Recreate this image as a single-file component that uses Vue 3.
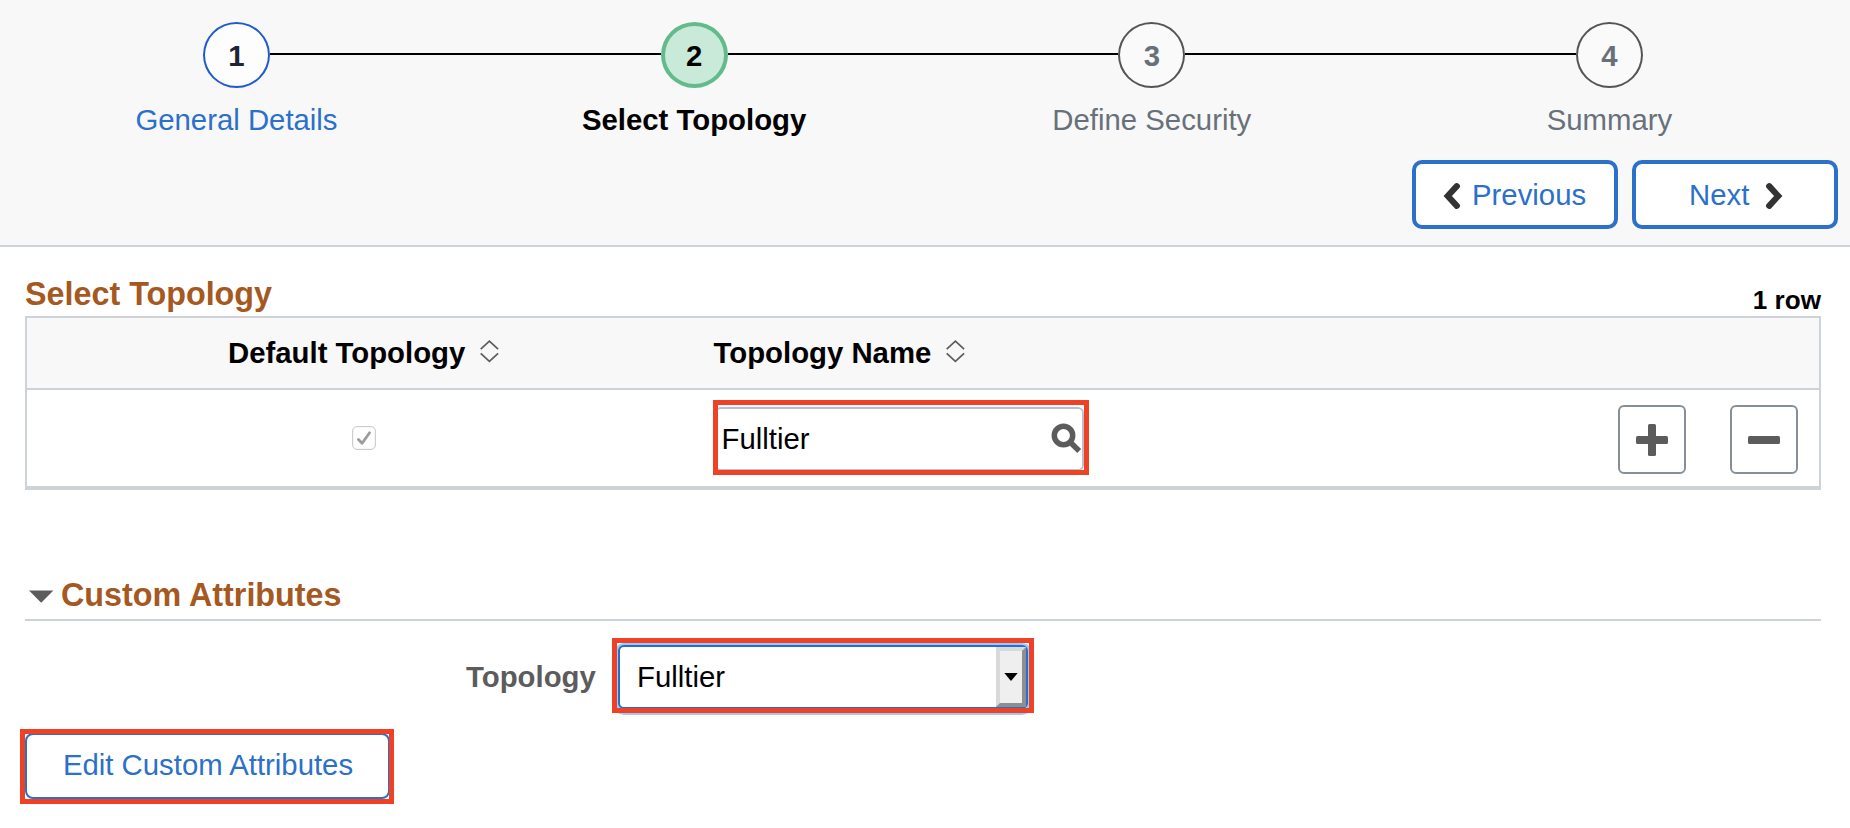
<script setup>
const steps = [
  { label: 'General Details', state: 'visited' },
  { label: 'Select Topology', state: 'current' },
  { label: 'Define Security', state: 'pending' },
  { label: 'Summary', state: 'pending' },
]
const columns = ['Default Topology', 'Topology Name']
const rows = [{ name: 'Fulltier' }]
</script>

<template>
  <div class="page">
    <header class="top">
      <ol class="steps">
        <li v-for="(step, i) in steps" :key="step.label" class="step" :class="step.state">
          <div class="track">
            <span class="line"></span>
            <span class="dot">{{ i + 1 }}</span>
            <span class="line"></span>
          </div>
          <span class="label">{{ step.label }}</span>
        </li>
      </ol>
      <nav class="nav">
        <button class="nav-btn prev">
          <svg class="chev" width="18" height="28" viewBox="0 0 18 28">
            <path d="M13.8 4.2 L4.8 14 L13.8 23.8" />
          </svg>
          <span>Previous</span>
        </button>
        <button class="nav-btn next">
          <span>Next</span>
          <svg class="chev" width="18" height="28" viewBox="0 0 18 28">
            <path d="M4.2 4.2 L13.2 14 L4.2 23.8" />
          </svg>
        </button>
      </nav>
    </header>

    <section class="grid-section">
      <div class="grid-title">
        <h2>Select Topology</h2>
        <span class="count">{{ rows.length }} row</span>
      </div>
      <div class="grid">
        <div class="cells head">
          <div v-for="(col, i) in columns" :key="col" class="th" :class="{ center: i === 0 }">
            <span>{{ col }}</span>
            <svg class="sort" width="19" height="23" viewBox="0 0 19 23">
              <path d="M0.7 9.2 L9.4 1.2 L18.1 9.2 M0.7 13.4 L9.4 21.4 L18.1 13.4" />
            </svg>
          </div>
        </div>
        <div v-for="row in rows" :key="row.name" class="cells body">
          <div class="check-cell">
            <span class="check">
              <svg width="22" height="22" viewBox="0 0 22 22">
                <path d="M5.4 12.4 L9.1 16.2 L16.6 5.8" />
              </svg>
            </span>
          </div>
          <div class="lookup marked">
            <div class="lookup-input">
              <span>{{ row.name }}</span>
              <svg class="search" width="31" height="31" viewBox="0 0 31 31">
                <circle cx="12.5" cy="12.5" r="9.2" />
                <path d="M18.5 18.5 L28.2 28" />
              </svg>
            </div>
          </div>
          <div class="actions">
            <button class="sq">
              <svg width="32" height="32" viewBox="0 0 32 32">
                <rect x="0" y="12" width="32" height="8" rx="1.5" />
                <rect x="12" y="0" width="8" height="32" rx="1.5" />
              </svg>
            </button>
            <button class="sq">
              <svg width="32" height="32" viewBox="0 0 32 32">
                <rect x="0" y="12" width="32" height="8" rx="1.5" />
              </svg>
            </button>
          </div>
        </div>
      </div>
    </section>

    <section class="attrs">
      <div class="attrs-title">
        <svg width="25" height="13" viewBox="0 0 25 13"><path d="M0 0.6 H24.4 L12.2 12.8 Z" /></svg>
        <h2>Custom Attributes</h2>
      </div>
      <div class="field">
        <label>Topology</label>
        <div class="select-wrap marked">
          <div class="select">
            <span class="value">Fulltier</span>
            <span class="arrow">
              <svg width="14" height="8" viewBox="0 0 14 8"><path d="M0.3 0 H13.7 L7 8 Z" /></svg>
            </span>
          </div>
        </div>
      </div>
      <div class="edit-wrap marked">
        <button class="edit">Edit Custom Attributes</button>
      </div>
    </section>
  </div>
</template>

<style>
body {
  background: #fff;
}
</style>

<style scoped>
.page {
  width: 1850px;
  height: 828px;
  overflow: hidden;
  background: #fff;
  color: #000;
  font-family: "Liberation Sans", Arial, sans-serif;
  font-size: 29.33px;
  line-height: 34px;
  white-space: nowrap;
}
.page * {
  box-sizing: border-box;
}
button {
  font: inherit;
  margin: 0;
  padding: 0;
  background: #fff;
}
svg {
  display: block;
  flex: none;
}
h2 {
  margin: 0;
  font-size: 32.3px;
  line-height: 36px;
  color: #a5581f;
}

/* Step train and navigation */
.top {
  box-sizing: border-box;
  height: 247px;
  padding-top: 22px;
  background: #f8f8f8;
  border-bottom: 2px solid #ced3d9;
}
.steps {
  display: grid;
  grid-template-columns: repeat(4, 457.67px);
  margin: 0;
  padding: 0 0 0 7.67px;
  list-style: none;
}
.track {
  display: flex;
}
.line {
  flex: 1;
  height: 2px;
  margin-top: 31px;
  background: #000;
}
.step:first-child .line:first-child,
.step:last-child .line:last-child {
  visibility: hidden;
}
.dot {
  width: 67px;
  height: 66px;
  border: 2px solid #555;
  border-radius: 50%;
  background: #fafafa;
  text-align: center;
  font-weight: bold;
  line-height: 64px;
  color: #68717a;
}
.label {
  display: block;
  margin-top: 15px;
  text-align: center;
  color: #68717a;
}
.visited .dot {
  border-color: #1f5bcc;
  background: #fdfdfd;
  color: #1e2433;
}
.visited .label {
  color: #2b70c9;
}
.current .dot {
  border: 4px solid #63ba8b;
  background: #c9ead8;
  line-height: 60px;
  color: #000;
}
.current .label {
  font-weight: bold;
  color: #000;
}
.nav {
  display: flex;
  justify-content: flex-end;
  gap: 14px;
  margin: 23px 12px 0 0;
}
.nav-btn {
  display: flex;
  align-items: center;
  width: 206px;
  height: 69px;
  border: 4px solid #2b70c9;
  border-radius: 10px;
  color: #2b70c9;
}
.nav-btn span {
  margin-top: 0;
}
.prev {
  padding-left: 27px;
  gap: 11px;
}
.next {
  padding-left: 53px;
  gap: 16px;
}
.chev {
  margin-top: 3px;
}
.chev path {
  fill: none;
  stroke: #333;
  stroke-width: 6.2;
  stroke-linecap: round;
  stroke-linejoin: miter;
}

/* Topology grid */
.grid-section {
  width: 1796px;
  margin-left: 25px;
  padding-top: 29px;
}
.grid-title {
  display: flex;
  justify-content: space-between;
  height: 40px;
}
.count {
  font-size: 26.1px;
  font-weight: bold;
  line-height: 30px;
  margin-top: 9px;
}
.grid {
  border: 2px solid #ced3da;
  border-bottom-width: 4px;
}
.cells {
  display: grid;
  grid-template-columns: 685.5px 376.5px 1fr;
}
.head {
  height: 72px;
  background: #f8f8f8;
  border-bottom: 2px solid #ced3da;
}
.th {
  display: flex;
  padding: 18px 0 0 1px;
  font-weight: bold;
}
.th.center {
  padding-left: 201px;
}
.sort {
  margin: 4px 0 0 15px;
}
.sort path {
  fill: none;
  stroke: #5c5c5c;
  stroke-width: 1.7;
}
.body {
  height: 96px;
}
.check-cell {
  padding: 36px 0 0 325px;
}
.check {
  display: block;
  width: 24px;
  height: 24px;
  border: 1px solid #cdcdcd;
  border-radius: 5px;
  box-shadow: inset 0 0 2px #ddd;
}
.check path {
  fill: none;
  stroke: #9b9b9b;
  stroke-width: 2.8;
  stroke-linecap: round;
  stroke-linejoin: round;
}
/* Red callout frame laid over a control */
.marked {
  position: relative;
}
.marked::after {
  content: "";
  position: absolute;
  inset: 0.4px;
  border: 5px solid #ee4126;
}
.lookup {
  height: 75px;
  margin-top: 10px;
  padding: 7px 5px 4px 2px;
}
.lookup-input {
  display: flex;
  justify-content: space-between;
  height: 64px;
  padding: 13px 0 0 5px;
  border: 2px solid #b9c2cc;
  border-radius: 6px;
}
.search {
  margin-top: 1px;
}
.search circle,
.search path {
  fill: none;
  stroke: #5c5c5c;
  stroke-width: 5.5;
}
.actions {
  display: flex;
  justify-content: flex-end;
  gap: 44px;
  padding: 15px 21px 0 0;
}
.sq {
  display: flex;
  align-items: center;
  justify-content: center;
  width: 68px;
  height: 69px;
  padding-top: 1px;
  border: 2px solid #868f97;
  border-radius: 6px;
}
.sq svg {
  fill: #5c5c5c;
}

/* Custom attributes */
.attrs {
  width: 1796px;
  margin: 87px 0 0 25px;
}
.attrs-title {
  display: flex;
  gap: 7px;
  height: 44px;
  padding-left: 4px;
  border-bottom: 2px solid #ced3d9;
}
.attrs-title svg {
  margin-top: 13px;
  fill: #5c5c5c;
}
.field {
  display: flex;
  margin-top: 17px;
  padding-left: 441px;
}
.field label {
  width: 146px;
  padding-top: 22px;
  font-weight: bold;
  color: #5c5c5c;
}
.select-wrap {
  width: 422px;
  height: 75px;
  padding: 7px 6px 4px 6px;
}
.select {
  display: flex;
  justify-content: space-between;
  height: 64px;
  border: 2px solid #2470d0;
  border-radius: 6px;
  box-shadow: 0 2px 0 4px #9dc9f8;
  background: #fff;
}
.value {
  padding: 13px 0 0 17px;
}
.arrow {
  display: flex;
  align-items: center;
  justify-content: center;
  width: 30px;
  border: 4px solid;
  border-color: #d9d9d9 #8f8f8f #8f8f8f #d9d9d9;
  background: #efefef;
}
.edit-wrap {
  width: 374px;
  height: 75px;
  margin: 16px 0 0 -5px;
  padding: 4px 4px 5px 5px;
}
.edit {
  display: block;
  width: 365px;
  height: 66px;
  border: 2px solid #2b70c9;
  border-radius: 8px;
  padding: 0 0 3px 1px;
  line-height: 34px;
  color: #2b70c9;
}
</style>
